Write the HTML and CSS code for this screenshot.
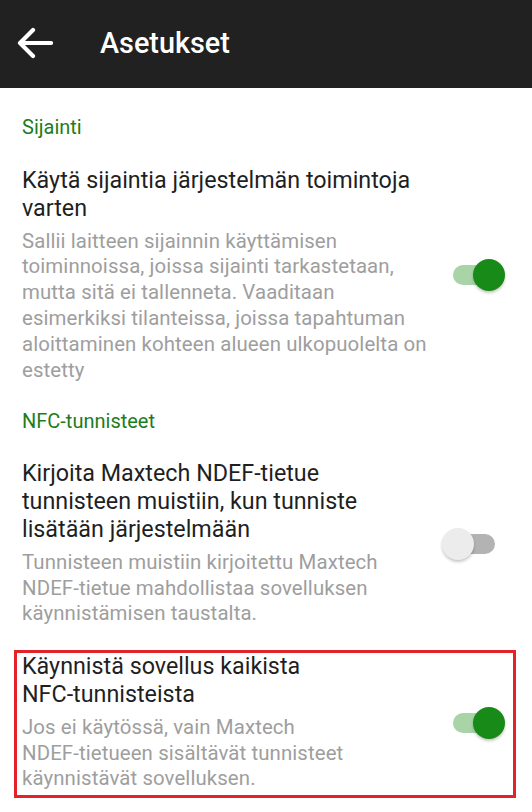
FILE: index.html
```html
<!DOCTYPE html>
<html lang="fi">
<head>
<meta charset="utf-8">
<title>Asetukset</title>
<link rel="stylesheet" href="styles.css">
</head>
<body>
<header class="appbar">
  <svg class="back" width="36" height="32" viewBox="0 0 36 32" aria-hidden="true">
    <path d="M34 16 H4 M16 3 L3 16 L16 29" fill="none" stroke="#fff" stroke-width="4.2" stroke-linecap="round" stroke-linejoin="round"/>
  </svg>
  <h1 class="appbar-title">Asetukset</h1>
</header>
<main class="prefs">
  <h2 class="cat">Sijainti</h2>
  <div class="pref">
    <div class="pref-text">
      <div class="pref-title">Käytä sijaintia järjestelmän toimintoja varten</div>
      <div class="pref-summary">Sallii laitteen sijainnin käyttämisen toiminnoissa, joissa sijainti tarkastetaan, mutta sitä ei tallenneta. Vaaditaan esimerkiksi tilanteissa, joissa tapahtuman aloittaminen kohteen alueen ulkopuolelta on estetty</div>
    </div>
    <div class="switch on"><span class="track"></span><span class="thumb"></span></div>
  </div>
  <h2 class="cat cat-nfc">NFC-tunnisteet</h2>
  <div class="pref pref-2">
    <div class="pref-text">
      <div class="pref-title">Kirjoita Maxtech <span class="nw">NDEF-tietue</span> tunnisteen muistiin, kun tunniste lisätään järjestelmään</div>
      <div class="pref-summary">Tunnisteen muistiin kirjoitettu Maxtech <span class="nw">NDEF-tietue</span> mahdollistaa sovelluksen käynnistämisen taustalta.</div>
    </div>
    <div class="switch off"><span class="track"></span><span class="thumb"></span></div>
  </div>
  <div class="pref pref-highlight">
    <div class="pref-text">
      <div class="pref-title">Käynnistä sovellus kaikista <span class="nw">NFC-tunnisteista</span></div>
      <div class="pref-summary">Jos ei käytössä, vain Maxtech <span class="nw">NDEF-tietueen</span> sisältävät tunnisteet käynnistävät sovelluksen.</div>
    </div>
    <div class="switch on"><span class="track"></span><span class="thumb"></span></div>
  </div>
</main>
</body>
</html>
```
FILE: styles.css
```css
* { box-sizing: border-box; }
html, body { margin: 0; padding: 0; background: #fff; }
body {
  font-family: Roboto, "Noto Sans", sans-serif;
  width: 532px;
  height: 812px;
  overflow: hidden;
}
.nw { white-space: nowrap; }
.appbar {
  height: 88px;
  background: #212121;
  display: flex;
  align-items: center;
  padding-left: 17px;
}
.back { display: block; margin-top: -2px; }
.appbar-title {
  margin: 0 0 0 47px;
  color: #fff;
  font-size: 28.8px;
  font-weight: 500;
  margin-top: -2px;
}
.prefs { padding-top: 27px; }
.cat {
  margin: 0;
  padding-left: 22px;
  color: #1c7d1c;
  font-size: 20px;
  font-weight: 400;
  line-height: 24px;
}
.cat-nfc { margin-top: 26px; }
.pref {
  display: flex;
  align-items: center;
  padding: 0 27px 0 22px;
  margin-top: 28px;
}
.pref-2 { margin-top: 27px; }
.pref-text { flex: 1; min-width: 0; }
.pref-title {
  color: #1f1f1f;
  font-size: 23.3px;
  line-height: 27.8px;
}
.pref-summary {
  margin-top: 6px;
  color: #9e9e9e;
  font-size: 20.4px;
  line-height: 25.8px;
  letter-spacing: 0.1px;
}
.pref-highlight {
  margin: 23px 16px 0 14px;
  border: 3px solid #e3222a;
  padding: 0 8px 3px 5px;
}
.switch {
  position: relative;
  flex: none;
  width: 63px;
  height: 34px;
  margin-left: 14px;
}
.track {
  position: absolute;
  left: 11px;
  top: 7px;
  width: 42px;
  height: 20px;
  border-radius: 10px;
}
.thumb {
  position: absolute;
  top: 1px;
  width: 32px;
  height: 32px;
  border-radius: 50%;
  box-shadow: 0 2px 3px rgba(0,0,0,0.22);
}
.on .track { background: #a8d4a8; }
.on .thumb { right: 0; background: #178a17; }
.off .track { background: #b3b3b3; }
.off .thumb { left: 0; background: #ececec; }
```
